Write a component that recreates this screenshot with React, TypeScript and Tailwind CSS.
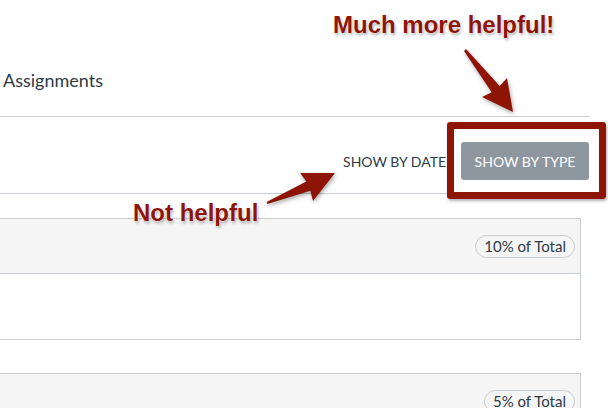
import React from 'react';

const labelClass =
  "absolute whitespace-nowrap font-['Liberation_Sans',Arial,sans-serif] text-[24px] font-bold leading-none text-[#8e1506] [text-shadow:0_0_1px_#fff,0_0_2px_#fff,1px_2px_3px_rgba(0,0,0,0.35)]";

function GroupPanel({ weight }: { weight: string }) {
  return (
    <div className="-ml-[10px] w-[591px] border border-[#c7cdd1]">
      <div className="flex h-[55px] items-center justify-end border-b border-[#c7cdd1] bg-[#f5f5f5] pr-[5px]">
        <span className="rounded-full border border-[#c7cdd1] px-[8px] text-[15px] leading-[21px] text-[#2d3b45]">
          {weight} of Total
        </span>
      </div>
      <div className="h-[65px] bg-white" />
    </div>
  );
}

export default function App() {
  return (
    <div className="relative h-[408px] w-[608px] overflow-hidden bg-white font-['Lato','Liberation_Sans',sans-serif] text-[#2d3b45]">
      <div className="w-[590px]">
        {/* page title */}
        <div className="h-[117px] border-b border-[#c7cdd1] pl-[3px] pt-[69px]">
          <h1 className="text-[18px] font-normal leading-[22px]">Assignments</h1>
        </div>

        {/* toolbar */}
        <div className="flex h-[77px] items-start justify-end gap-[15px] border-b border-[#c7cdd1] pr-px pt-[25px]">
          <div className="flex h-[38px] items-center text-[14px] uppercase">Show by Date</div>
          <button className="h-[38px] w-[128px] rounded-[3px] bg-[#8e979f] text-[14px] uppercase text-white">
            Show by Type
          </button>
        </div>

        {/* assignment groups */}
        <div className="mt-[24px] flex flex-col gap-[33px]">
          <GroupPanel weight="10%" />
          <GroupPanel weight="5%" />
        </div>
      </div>

      {/* annotations */}
      <div className="absolute left-[447px] top-[122px] h-[77px] w-[159px] rounded-[3px] border-[7px] border-[#8e1506] shadow-[1px_2px_3px_rgba(0,0,0,0.3)]" />

      <span className={`${labelClass} left-[333px] top-[13px]`}>Much more helpful!</span>
      <span className={`${labelClass} left-[133px] top-[201px]`}>Not helpful</span>

      <svg className="absolute left-0 top-0 drop-shadow-[1px_2px_2px_rgba(0,0,0,0.35)]" width="608" height="408" viewBox="0 0 608 408">
        <polygon points="464,51 466,49 499.7,86 507,78 513,112 482,97 491.7,92.2" fill="#8e1506" />
        <polygon points="266.6,202.1 306.3,181.6 300,173 335,173 313,201 310.3,190.8 267.4,203.9" fill="#8e1506" />
      </svg>
    </div>
  );
}
